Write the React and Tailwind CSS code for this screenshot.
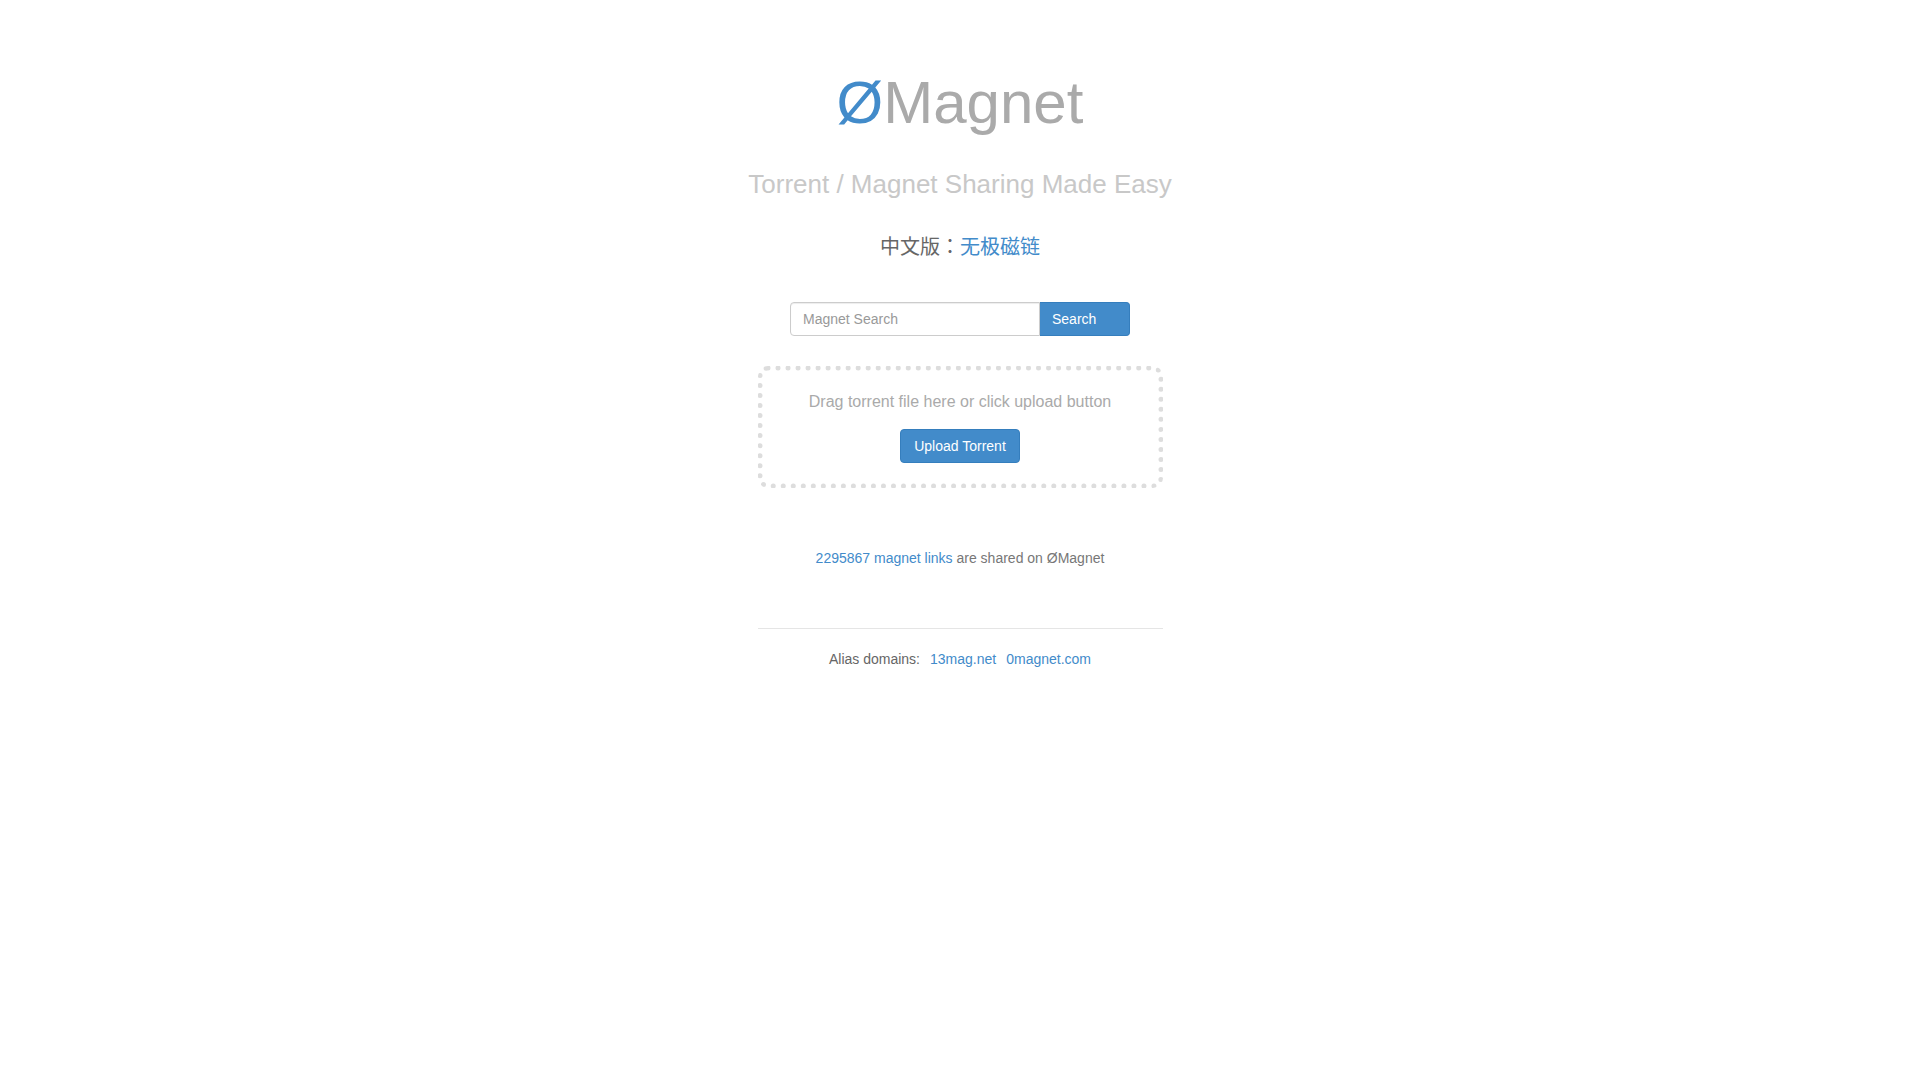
import { useState } from "react";

const domains = ["13mag.net", "0magnet.com"];

export default function App() {
  const [query, setQuery] = useState("");

  const handleSubmit = event => {
    event.preventDefault();
  };

  return (
    <main className="flex flex-col items-center px-4 pt-[70px] pb-10 text-center text-sm leading-5 text-[#666] font-['Liberation_Sans','Noto_Sans_CJK_JP',sans-serif]">
      <h1 className="text-[60px] leading-[66px] text-[#aaa]">
        <a href="#" className="text-[#428bca]">Ø</a>Magnet
      </h1>
      <h2 className="mt-[34px] text-[26px] leading-[28px] text-[#c8c8c8]">
        Torrent / Magnet Sharing Made Easy
      </h2>
      <p className="mt-[35px] text-[20px] leading-[28px]">
        中文版：<a href="#" className="text-[#428bca]">无极磁链</a>
      </p>

      <form className="mt-[41px] flex w-full max-w-[340px]" onSubmit={handleSubmit}>
        <input
          type="text"
          aria-label="Magnet Search"
          placeholder="Magnet Search"
          value={query}
          onChange={event => setQuery(event.target.value)}
          className="h-[34px] min-w-0 flex-1 rounded-l border border-[#ccc] bg-white px-3 text-[#555] shadow-[inset_0_1px_1px_rgba(0,0,0,0.075)] placeholder:text-[#999]"
        />
        <button
          type="submit"
          className="h-[34px] w-[90px] rounded-r border border-l-0 border-[#357ebd] bg-[#428bca] px-3 text-left text-white"
        >
          Search
        </button>
      </form>

      <DropZone />

      <p className="mt-[60px] text-[#777]">
        <a href="#" className="text-[#428bca]">2295867 magnet links</a> are shared on ØMagnet
      </p>

      <footer className="mt-[60px] flex w-full max-w-[405px] justify-center gap-[10px] border-t border-[#e5e5e5] pt-5">
        <span>Alias domains:</span>
        {domains.map(domain => (
          <a key={domain} href="#" className="text-[#428bca]">{domain}</a>
        ))}
      </footer>
    </main>
  );
}

function DropZone() {
  return (
    <section className="mt-[30px] w-full max-w-[405px] rounded-[10px] border-[5px] border-dotted border-[#ddd] py-5">
      <p className="text-base leading-[22px] text-[#aaa]">
        Drag torrent file here or click upload button
      </p>
      <button
        type="button"
        className="mt-4 h-[34px] w-[120px] rounded border border-[#357ebd] bg-[#428bca] text-white"
      >
        Upload Torrent
      </button>
    </section>
  );
}
